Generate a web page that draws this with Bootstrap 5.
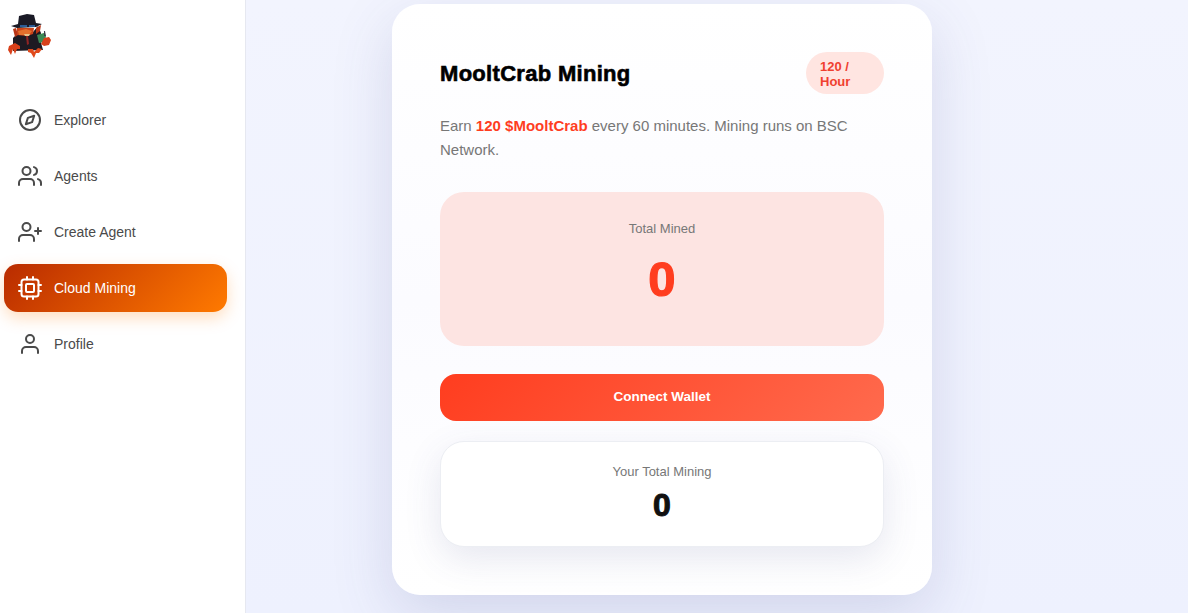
<!DOCTYPE html>
<html lang="en">
<head>
<meta charset="utf-8">
<title>Cloud Mining</title>
<link href="https://cdn.jsdelivr.net/npm/bootstrap@5.3.0/dist/css/bootstrap.min.css" rel="stylesheet">
<style>
html,body{height:100%;overflow:hidden}
body{font-family:"Liberation Sans",Arial,sans-serif;background:#f1f3ff;color:#333}
.shell{height:613px}
.side{width:246px;flex:none;background:#fff;border-right:1px solid #e6e8f0;padding:14px 18px 0 4px}
.logo-box{height:82px}
.logo-art{filter:blur(.45px)}
.menu{gap:8px}
.menu-link{height:48px;padding-left:14px;gap:12px;border-radius:14px;color:#4a4a4a;font-size:14px;text-decoration:none}
.menu-link svg{width:24px;height:24px;flex:none;fill:none;stroke:currentColor;stroke-width:2;stroke-linecap:round;stroke-linejoin:round}
.menu-link.on{background:linear-gradient(135deg,#b92b00,#ff7a00);color:#fff;box-shadow:0 6px 16px rgba(255,122,0,.25)}
.stage{background:linear-gradient(180deg,#f2f4fe 0%,#eef1fe 100%);padding:4px 110px 0 0}
.panel{width:540px;height:591px;background:linear-gradient(180deg,#fff 0%,#fbfbff 50%,#fff 100%);border-radius:28px;padding:48px;box-shadow:0 20px 60px rgba(70,80,140,.17)}
.head-row{height:42px;margin-bottom:20px}
.title-txt{font-size:22px;font-weight:700;color:#000;margin:2px 0 0;-webkit-text-stroke:.6px #000;letter-spacing:.3px}
.rate{width:78px;height:42px;padding:7px 14px;background:#ffe5e1;color:#f0402f;border-radius:21px;font-size:13px;font-weight:700;line-height:15px}
.intro{font-size:15px;line-height:24px;color:#777;margin:0 0 30px}
.intro b{color:#ff3d1f}
.mined{height:154px;background:#fde4e2;border-radius:24px;margin-bottom:28px;padding-top:29px}
.mined-label,.own-label{font-size:13px;line-height:16px;color:#777}
.mined-num{font-size:49px;line-height:56px;font-weight:700;color:#ff3d1f;margin-top:14px;-webkit-text-stroke:1.2px #ff3d1f}
.connect{height:47px;width:100%;border:0;border-radius:16px;background:linear-gradient(135deg,#ff3d1f,#ff6a4d);color:#fff;font-size:13.5px;font-weight:700;margin-bottom:20px}
.own{height:106px;background:#fff;border:1px solid #eceef3;border-radius:24px;padding-top:22px;box-shadow:0 12px 36px rgba(70,80,140,.13)}
.own-num{font-size:32px;line-height:36px;font-weight:700;color:#111;margin-top:7px;-webkit-text-stroke:1px #111}
</style>
</head>
<body>
<div class="shell d-flex">
  <aside class="side d-flex flex-column">
    <div class="logo-box">
      <svg class="logo-art" width="52" height="60" viewBox="4 14 52 60" aria-label="MooltCrab logo">
        <path d="M13 38l4-4 16-2 5-6 3 7-1 6 3 11-30 1z" fill="#1e1a22"/>
        <path d="M13 29l3-1 2 7-3 2zM36 28l5-3-1 6-4 3z" fill="#b93516"/>
        <path d="M17 28h17l-1 6-6 2-10-1z" fill="#c9431a"/>
        <path d="M18 31l8-2 6 2-3 4-10 0z" fill="#e3702c"/>
        <path d="M24 34h6l-1 2-4 0z" fill="#e6c48a"/>
        <path d="M11 26l7-2 1-8 8-2 7 1 2 8 6 1-6 3-19 1z" fill="#1a1a26"/>
        <path d="M20 25h7v2h-7zM29 25h6v2h-6z" fill="#2a5c98"/>
        <path d="M26 36l2 0 1 8-2 1z" fill="#8f2424"/>
        <path d="M37 35l7-2 2 3-1 6-6 1z" fill="#3b8a55"/>
        <path d="M44 31h1l1 5h-2z" fill="#3a3f4a"/>
        <path d="M44 38l5-1 2 3-2 5-5 1-3-2z" fill="#d8401a"/>
        <path d="M9 46l6-3 5 3 0 3-3 0-2 5-2-5-2 6-3-5z" fill="#d8401a"/>
        <path d="M28 49l5 0 1 3 4-4 4 1-3 4-3 0-2 5-3-5-3-1z" fill="#e04a1c"/>
      </svg>
    </div>
    <nav class="menu d-flex flex-column">
      <a class="menu-link d-flex align-items-center" href="#"><svg viewBox="0 0 24 24"><circle cx="12" cy="12" r="10"/><path d="M16.2 7.8l-2.1 6.3-6.3 2.1 2.1-6.3z"/></svg>Explorer</a>
      <a class="menu-link d-flex align-items-center" href="#"><svg viewBox="0 0 24 24"><path d="M16 21v-2a4 4 0 0 0-4-4H5a4 4 0 0 0-4 4v2"/><circle cx="8.5" cy="7" r="4"/><path d="M23 21v-2a4 4 0 0 0-3-3.87"/><path d="M16 3.13a4 4 0 0 1 0 7.75"/></svg>Agents</a>
      <a class="menu-link d-flex align-items-center" href="#"><svg viewBox="0 0 24 24"><path d="M16 21v-2a4 4 0 0 0-4-4H5a4 4 0 0 0-4 4v2"/><circle cx="8.5" cy="7" r="4"/><path d="M20 8v6M23 11h-6"/></svg>Create Agent</a>
      <a class="menu-link on d-flex align-items-center" href="#"><svg viewBox="0 0 24 24"><rect x="3.5" y="3.5" width="17" height="17" rx="2.5"/><rect x="8" y="8" width="8" height="8" rx="1"/><path d="M9 1v2.5M15 1v2.5M9 20.5V23M15 20.5V23M20.5 9H23M20.5 15H23M1 9h2.5M1 15h2.5"/></svg>Cloud Mining</a>
      <a class="menu-link d-flex align-items-center" href="#"><svg viewBox="0 0 24 24"><path d="M20 21v-2a4 4 0 0 0-4-4H8a4 4 0 0 0-4 4v2"/><circle cx="12" cy="7" r="4"/></svg>Profile</a>
    </nav>
  </aside>
  <main class="stage flex-grow-1 d-flex justify-content-center align-items-start">
    <section class="panel">
      <div class="head-row d-flex justify-content-between align-items-center">
        <h1 class="title-txt">MooltCrab Mining</h1>
        <span class="rate">120 / Hour</span>
      </div>
      <p class="intro">Earn <b>120 $MooltCrab</b> every 60 minutes. Mining runs on BSC Network.</p>
      <div class="mined text-center">
        <div class="mined-label">Total Mined</div>
        <div class="mined-num">0</div>
      </div>
      <button class="connect" type="button">Connect Wallet</button>
      <div class="own text-center">
        <div class="own-label">Your Total Mining</div>
        <div class="own-num">0</div>
      </div>
    </section>
  </main>
</div>
<script src="https://cdn.jsdelivr.net/npm/bootstrap@5.3.0/dist/js/bootstrap.bundle.min.js"></script>
</body>
</html>
